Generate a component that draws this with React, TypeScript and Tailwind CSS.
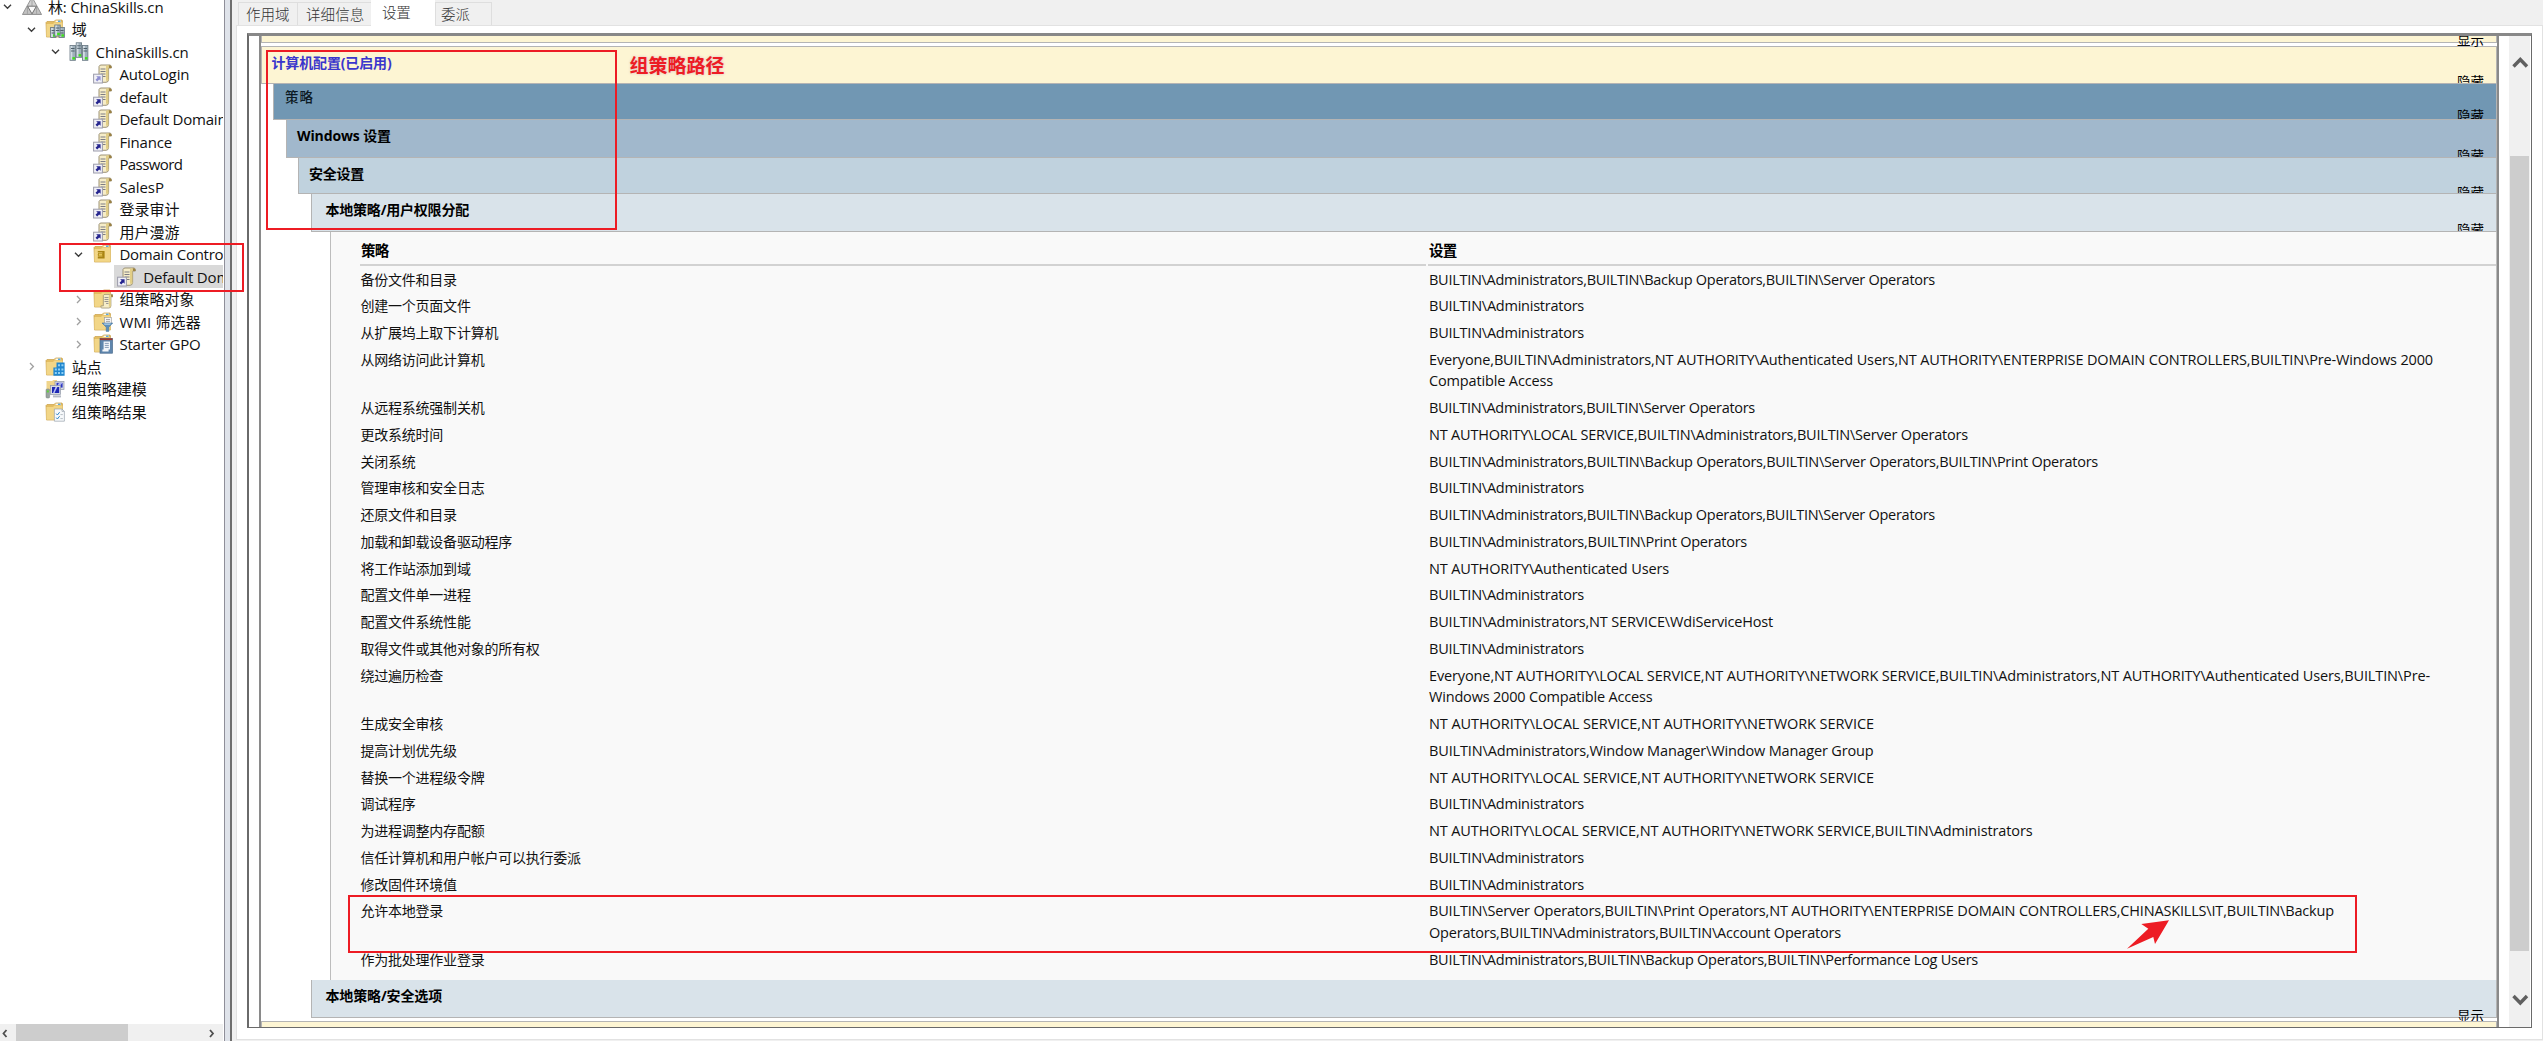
import { useLayoutEffect, useRef, type ReactNode } from 'react';

/* A single line of text whose tracking is tuned so that it spans `w` pixels. */
function Fit({ t, w, className = '' }: { t: string; w: number; className?: string }) {
  const ref = useRef<HTMLSpanElement>(null);
  useLayoutEffect(() => {
    const el = ref.current!;
    el.style.letterSpacing = '0px';
    const natural = el.getBoundingClientRect().width;
    el.style.letterSpacing = `${(w - natural) / t.length}px`;
  }, [t, w]);
  return (
    <span ref={ref} className={'inline-block whitespace-pre ' + className}>
      {t}
    </span>
  );
}

/* ---------- icons ---------- */

const Folder = () => (
  <>
    <path d="M1 3.5 L2 2.5 H9 L10.5 1 H17 L17.5 2 V18 H1.5 Z" fill="#e3bd62" stroke="#c99f47" strokeWidth=".7" />
    <path d="M1.5 5 H8 L9.5 3.5 H17.5 V17.8 H1.5 Z" fill="#f2d687" />
    <rect x="10.5" y="1.6" width="5.5" height="1.3" fill="#fff" />
    <rect x="13" y="1.6" width="2.6" height="1.3" fill="#4aa0dc" />
  </>
);

const Server = ({ x, y, h }: { x: number; y: number; h: number }) => (
  <>
    <rect x={x} y={y} width="5.4" height={h} fill="#9fb0bb" stroke="#657680" strokeWidth=".8" />
    <rect x={x + 0.5} y={y + 0.5} width="1.8" height={h - 1} fill="#d3dde4" />
    <path d={`M${x + 1} ${y + 3}h3.6M${x + 1} ${y + 5.5}h3.6`} stroke="#4f606b" strokeWidth="1" />
    <rect x={x + 2.4} y={y + h - 3.2} width="2.6" height="2.4" fill="#3fe01c" />
  </>
);

const Scroll = ({ x = 0, y = 0, s = 1 }: { x?: number; y?: number; s?: number }) => (
  <g transform={`translate(${x} ${y}) scale(${s})`}>
    <path d="M6 2.5 Q6.5 1 8 1 H17 Q18.6 1 18.4 4 H15.6 V15.5 Q15.4 18.3 13 18.3 H4 Q2.5 18 3 15.5 H6 Z" fill="#f6edc8" stroke="#93886a" strokeWidth=".9" />
    <path d="M13 2 V16.8 H15.4 V3 Q15.6 1.2 17 1.2 H14.4 Z" fill="#e2ce86" />
    <path d="M15.8 1.3 Q18.6 1 18.4 4 H15.8 Z" fill="#9c8140" />
    <path d="M7.5 5h5M7.5 7.5h5M7.5 10h5M9.5 12.5h3" stroke="#7d7c84" strokeWidth="1" />
  </g>
);

function Icon({ kind }: { kind: string }) {
  return (
    <svg viewBox="0 0 20 20" className="h-5 w-5 shrink-0">
      {kind === 'forest' && (
        <>
          <path d="M10 0 L19.6 17.5 H.4 Z" fill="#a5a5a5" stroke="#7c7c7c" strokeWidth=".7" />
          <path d="M10 1 L14.4 9 H5.6Z" fill="#d2d2d2" />
          <path d="M5.4 9.6 L9.6 16.8 H1.4Z M14.6 9.6 L18.6 16.8 H10.4Z" fill="#c2c2c2" />
          <path d="M5.6 9.2 H14.4 L10 16.8Z" fill="#fafafa" stroke="#6c6c6c" strokeWidth=".9" />
          <path d="M10 1 V9 M5.4 9.6 V16.8 M14.6 9.6V16.8" stroke="#8c8c8c" strokeWidth=".6" />
        </>
      )}
      {kind === 'domains' && (
        <>
          <Folder />
          <Server x={5.6} y={8.5} h={10} />
          <Server x={14} y={8.5} h={10} />
          <Server x={9.8} y={6} h={11} />
        </>
      )}
      {kind === 'domain' && (
        <>
          <Server x={1} y={3.5} h={14.8} />
          <Server x={13.5} y={3.5} h={14.8} />
          <Server x={7.2} y={0.8} h={14.5} />
        </>
      )}
      {(kind === 'link' || kind === 'linkoff') && (
        <>
          <Scroll />
          <rect x=".6" y="10.2" width="8.8" height="8.8" fill="#f0f0f7" stroke="#9c9cab" strokeWidth="1" />
          <path d="M3.2 12.2 H7.6 V16.8 L6.2 15.4 L4.2 17.4 L2.5 15.8 L4.6 13.7 Z" fill={kind === 'link' ? '#25258f' : '#8f8fd0'} />
        </>
      )}
      {kind === 'ou' && (
        <>
          <Folder />
          <path d="M4.8 7 H11.6 V14.4 H4.8 V12.6 H9.4 V11.4 H4.8 V10 H9.4 V8.6 H4.8Z" fill="#a98412" />
          <rect x="5.4" y="9.6" width="4" height="2.4" fill="#e6c552" stroke="#a98412" strokeWidth=".6" />
        </>
      )}
      {kind === 'objects' && (
        <>
          <Folder />
          <Scroll x={5.6} y={4.6} s={0.79} />
        </>
      )}
      {kind === 'wmi' && (
        <>
          <Folder />
          <rect x="11.5" y="5.5" width="7" height="6" fill="#f4f4f4" stroke="#9a9a9a" strokeWidth=".6" />
          <path d="M13 7.5h4M13 9.4h4" stroke="#888" strokeWidth=".7" />
          <path d="M9 11 H19.8 L15.8 15.2 V19.4 H13.2 V15.2 Z" fill="#5a8fbd" stroke="#406f99" strokeWidth=".5" />
          <path d="M10.5 11.6 H18 L17 12.8H11.6Z" fill="#b5d3ea" />
        </>
      )}
      {kind === 'starter' && (
        <>
          <Folder />
          <rect x="7" y="4.6" width="12.4" height="14.6" fill="#5f86ad" stroke="#47698c" strokeWidth=".7" />
          <rect x="7" y="4.3" width="12.4" height="1.8" fill="#9b3a32" />
          <path d="M10.6 7.4 H17 V15.4 H15.6 V17.4 H9.4 V15.6 H10.6Z" fill="#f3f6fa" />
          <path d="M11.8 9.4h4M11.8 11.4h4M11.8 13.4h4" stroke="#6d87a4" strokeWidth=".8" />
        </>
      )}
      {kind === 'sites' && (
        <>
          <Folder />
          <path d="M11.5 5.6 H19.6 V18.8 H8.4 V10.4 H11.5Z" fill="#1f86cf" />
          <path d="M13 7.2h2v2h-2zM16.4 7.2h2v2h-2zM9.8 11.4h2v2h-2zM13 11.4h2v2h-2zM16.4 11.4h2v2h-2zM9.8 15h2v2h-2zM13 15h2v2h-2zM16.4 15h2v2h-2z" fill="#8ed0f5" />
        </>
      )}
      {kind === 'modeling' && (
        <>
          <path d="M1.5 2 H7 L8.5 1 H12 V12 H1.5Z" fill="#f0d58b" />
          <rect x="10" y="2.4" width="9" height="8" fill="#d7dbe2" stroke="#8f96a6" strokeWidth=".7" />
          <path d="M11.5 3.8 H17.6 V8.6 H11.5Z" fill="#2b35c4" />
          <path d="M14 3.8 L17.6 3.8 L13.5 8.6 H11.5Z" fill="#a9b1f0" />
          <rect x="5.6" y="6.6" width="10" height="9" fill="#d7dbe2" stroke="#8f96a6" strokeWidth=".7" />
          <rect x="7" y="8" width="7.2" height="6" fill="#1e28b4" />
          <path d="M10.5 8 H12.4 L9.5 14H8Z" fill="#b9c0f5" />
          <rect x="8" y="16.4" width="8" height="2" fill="#b5bac4" />
          <rect x="1" y="10" width="3.6" height="9" rx="1" fill="#9aa3a0" stroke="#74807c" strokeWidth=".5" />
          <rect x="1.8" y="11.4" width="2" height="2" fill="#5ed43a" />
        </>
      )}
      {kind === 'results' && (
        <>
          <Folder />
          <path d="M9.4 7 H17 L19.4 9.4 V19.2 H9.4Z" fill="#f7f9fb" stroke="#9aa4ae" strokeWidth=".7" />
          <path d="M17 7 V9.4 H19.4" fill="none" stroke="#9aa4ae" strokeWidth=".7" />
          <path d="M11.2 11.6 l1.2 1.4 l2.2 -2.8 M11.2 15.6 l1.2 1.4 l2.2 -2.8" fill="none" stroke="#2f86c8" strokeWidth="1" />
          <path d="M15.4 12.6h2.4M15.4 16.6h2.4" stroke="#a5adb5" strokeWidth=".8" />
        </>
      )}
    </svg>
  );
}

/* ---------- tree ---------- */

type Node = { level: number; text: string; icon: string; w: number; open?: boolean; closed?: boolean; selected?: boolean };

const TREE: Node[] = [
  { level: 0, text: '林: ChinaSkills.cn', icon: 'forest', w: 115.5, open: true },
  { level: 1, text: '域', icon: 'domains', w: 15, open: true },
  { level: 2, text: 'ChinaSkills.cn', icon: 'domain', w: 93, open: true },
  { level: 3, text: 'AutoLogin', icon: 'linkoff', w: 70 },
  { level: 3, text: 'default', icon: 'link', w: 48 },
  { level: 3, text: 'Default Domain', icon: 'link', w: 107 },
  { level: 3, text: 'Finance', icon: 'link', w: 52.5 },
  { level: 3, text: 'Password', icon: 'link', w: 63 },
  { level: 3, text: 'SalesP', icon: 'link', w: 44.5 },
  { level: 3, text: '登录审计', icon: 'link', w: 60 },
  { level: 3, text: '用户漫游', icon: 'link', w: 60 },
  { level: 3, text: 'Domain Contro', icon: 'ou', w: 104, open: true },
  { level: 4, text: 'Default Dom', icon: 'link', w: 87, selected: true },
  { level: 3, text: '组策略对象', icon: 'objects', w: 75, closed: true },
  { level: 3, text: 'WMI 筛选器', icon: 'wmi', w: 81.5, closed: true },
  { level: 3, text: 'Starter GPO', icon: 'starter', w: 81, closed: true },
  { level: 1, text: '站点', icon: 'sites', w: 30, closed: true },
  { level: 1, text: '组策略建模', icon: 'modeling', w: 75 },
  { level: 1, text: '组策略结果', icon: 'results', w: 75 },
];

const INDENT = ['pl-0', 'pl-[23.8px]', 'pl-[47.6px]', 'pl-[71.4px]', 'pl-[95.2px]'];

function TreeRow({ n }: { n: Node }) {
  return (
    <div className={'flex h-[22.5px] items-center ' + INDENT[n.level]}>
      <div className="flex w-[19px] shrink-0 items-center pl-[3px]">
        {n.open && (
          <svg viewBox="0 0 9 9" className="h-[9px] w-[9px]">
            <path d="M1 2.8 L4.5 6.2 L8 2.8" fill="none" stroke="#3c3c3c" strokeWidth="1.4" />
          </svg>
        )}
        {n.closed && (
          <svg viewBox="0 0 9 9" className="h-[9px] w-[9px]">
            <path d="M3 1 L6.4 4.5 L3 8" fill="none" stroke="#a0a0a0" strokeWidth="1.3" />
          </svg>
        )}
      </div>
      <div className={'flex h-full min-w-0 flex-1 items-center gap-[6.5px] pl-[2.5px] ' + (n.selected ? 'bg-[#d9d9d9]' : '')}>
        <Icon kind={n.icon} />
        <Fit t={n.text} w={n.w} className="text-[15px] leading-[22px] text-[#111]" />
      </div>
    </div>
  );
}

function Sidebar() {
  return (
    <div className="flex w-[224px] shrink-0 flex-col bg-white">
      <div className="min-h-0 w-[223px] flex-1 overflow-hidden">
        <div className="-mt-[4.6px]">
          {TREE.map((n) => (
            <TreeRow key={n.text} n={n} />
          ))}
        </div>
      </div>
      <div className="flex h-[17px] w-[223px] items-center bg-[#f0f0f0]">
        <svg viewBox="0 0 16 17" className="h-[17px] w-4">
          <path d="M6.5 6 L3.5 9.5 L6.5 13" fill="none" stroke="#4f4f4f" strokeWidth="1.8" />
        </svg>
        <div className="h-full w-[112px] bg-[#cdcdcd]" />
        <div className="flex-1" />
        <svg viewBox="0 0 16 17" className="h-[17px] w-4">
          <path d="M3 6 L6 9.5 L3 13" fill="none" stroke="#4f4f4f" strokeWidth="1.8" />
        </svg>
      </div>
    </div>
  );
}

/* ---------- report ---------- */

function Action({ t, className }: { t: string; className: string }) {
  return <span className={'relative z-10 mr-[12px] shrink-0 whitespace-nowrap text-[13.5px] leading-[14px] text-black ' + className}>{t}</span>;
}

function Bar({ className, children }: { className: string; children: ReactNode }) {
  return <div className={'flex shrink-0 items-start justify-between border border-t-0 border-[#b4b4b4] ' + className}>{children}</div>;
}

const B = 'BUILTIN\\Administrators';
const N = 'NT AUTHORITY\\';

const ROWS: [string, [string, number][]][] = [
  ['备份文件和目录', [[B + ',BUILTIN\\Backup Operators,BUILTIN\\Server Operators', 506]]],
  ['创建一个页面文件', [[B, 155]]],
  ['从扩展坞上取下计算机', [[B, 155]]],
  ['从网络访问此计算机', [
    ['Everyone,' + B + ',' + N + 'Authenticated Users,' + N + 'ENTERPRISE DOMAIN CONTROLLERS,BUILTIN\\Pre-Windows 2000', 1004],
    ['Compatible Access', 124],
  ]],
  ['从远程系统强制关机', [[B + ',BUILTIN\\Server Operators', 326]]],
  ['更改系统时间', [[N + 'LOCAL SERVICE,' + B + ',BUILTIN\\Server Operators', 539]]],
  ['关闭系统', [[B + ',BUILTIN\\Backup Operators,BUILTIN\\Server Operators,BUILTIN\\Print Operators', 669]]],
  ['管理审核和安全日志', [[B, 155]]],
  ['还原文件和目录', [[B + ',BUILTIN\\Backup Operators,BUILTIN\\Server Operators', 506]]],
  ['加载和卸载设备驱动程序', [[B + ',BUILTIN\\Print Operators', 318]]],
  ['将工作站添加到域', [[N + 'Authenticated Users', 240]]],
  ['配置文件单一进程', [[B, 155]]],
  ['配置文件系统性能', [[B + ',NT SERVICE\\WdiServiceHost', 344]]],
  ['取得文件或其他对象的所有权', [[B, 155]]],
  ['绕过遍历检查', [
    ['Everyone,' + N + 'LOCAL SERVICE,' + N + 'NETWORK SERVICE,' + B + ',' + N + 'Authenticated Users,BUILTIN\\Pre-', 1001],
    ['Windows 2000 Compatible Access', 223.5],
  ]],
  ['生成安全审核', [[N + 'LOCAL SERVICE,' + N + 'NETWORK SERVICE', 445]]],
  ['提高计划优先级', [[B + ',Window Manager\\Window Manager Group', 444.5]]],
  ['替换一个进程级令牌', [[N + 'LOCAL SERVICE,' + N + 'NETWORK SERVICE', 445]]],
  ['调试程序', [[B, 155]]],
  ['为进程调整内存配额', [[N + 'LOCAL SERVICE,' + N + 'NETWORK SERVICE,' + B, 603.5]]],
  ['信任计算机和用户帐户可以执行委派', [[B, 155]]],
  ['修改固件环境值', [[B, 155]]],
  ['允许本地登录', [
    ['BUILTIN\\Server Operators,BUILTIN\\Print Operators,' + N + 'ENTERPRISE DOMAIN CONTROLLERS,CHINASKILLS\\IT,BUILTIN\\Backup', 905],
    ['Operators,' + B + ',BUILTIN\\Account Operators', 412],
  ]],
  ['作为批处理作业登录', [[B + ',BUILTIN\\Backup Operators,BUILTIN\\Performance Log Users', 549]]],
];

function PolicyTable() {
  return (
    <div className="ml-[69px] h-[748px] shrink-0 border-x border-[#bdbdbd] bg-[#f9f9f9] pl-[29px] text-[14.5px] leading-[21.6px] text-[#111]">
      <div className="flex gap-[2px] pt-[8px] font-bold text-black">
        <div className="w-[1066px] border-b-2 border-[#d2d2d2] pb-[2px] pl-px">
          <Fit t="策略" w={27.5} />
        </div>
        <div className="flex-1 border-b-2 border-[#d2d2d2] pb-[2px] pl-px">
          <Fit t="设置" w={27.5} />
        </div>
      </div>
      <div className="pt-[3px]">
        {ROWS.map(([name, lines]) => (
          <div key={name} className="flex pb-[5.17px]">
            <div className="w-[1068px] pl-[0.5px]">
              <Fit t={name} w={name.length * 13.77} className="text-[14px]" />
            </div>
            <div className="flex flex-1 flex-col items-start pl-px">
              {lines.map(([t, w]) => (
                <Fit key={t} t={t} w={w} />
              ))}
            </div>
          </div>
        ))}
      </div>
    </div>
  );
}

function Report() {
  return (
    <div className="ml-[10px] flex w-[2240px] shrink-0 flex-col overflow-hidden border-l-2 border-r-2 border-[#8a8a8a] bg-white text-[14px] font-bold">
      <Bar className="h-[7px] bg-[#fdf5d3]">
        <span />
        <Action t="显示" className="-mt-[3px] font-normal" />
      </Bar>
      <div className="mt-[3px] h-px shrink-0 bg-[#b4b4b4]" />
      <Bar className="h-[37px] overflow-hidden bg-[#fdf5d3]">
        <Fit t="计算机配置(已启用)" w={120} className="mt-[5px] ml-[9.5px] text-[#3a36cc]" />
        <Action t="隐藏" className="mt-[28px] font-normal" />
      </Bar>
      <Bar className="ml-[12px] h-[36px] overflow-hidden bg-[#7197b3]">
        <Fit t="策略" w={29} className="mt-[3px] ml-[11px] text-[13.5px] font-medium text-[#0c1a24]" />
        <Action t="隐藏" className="mt-[25px] font-normal" />
      </Bar>
      <Bar className="ml-[25px] h-[38px] overflow-hidden bg-[#a1b8cc]">
        <Fit t="Windows 设置" w={94} className="mt-[5px] ml-[10px]" />
        <Action t="隐藏" className="mt-[29px] font-normal" />
      </Bar>
      <Bar className="ml-[37px] h-[36px] overflow-hidden bg-[#c0d2de]">
        <Fit t="安全设置" w={55} className="mt-[5px] ml-[10px]" />
        <Action t="隐藏" className="mt-[28px] font-normal" />
      </Bar>
      <Bar className="ml-[50px] h-[38px] overflow-hidden bg-[#d9e3ea]">
        <Fit t="本地策略/用户权限分配" w={143.5} className="mt-[5px] ml-[13.5px]" />
        <Action t="隐藏" className="mt-[29px] font-normal" />
      </Bar>
      <div className="font-normal">
        <PolicyTable />
      </div>
      <Bar className="ml-[50px] h-[38px] border-t bg-[#d9e3ea]">
        <Fit t="本地策略/安全选项" w={116.5} className="mt-[5px] ml-[13.5px]" />
        <Action t="显示" className="mt-[29px] font-normal" />
      </Bar>
      <div className="relative z-20 mt-[3px] flex-1 border border-b-0 border-[#b4b4b4] bg-[#fdf5d3]" />
    </div>
  );
}

function ScrollBar() {
  return (
    <div className="ml-[10px] flex w-[21px] shrink-0 flex-col items-center bg-[#f0f0f0]">
      <svg viewBox="0 0 20 120" className="h-[120px] w-5">
        <path d="M3.5 30.5 L10.3 23.5 L17 30.5" fill="none" stroke="#5f5f5f" strokeWidth="3.4" />
      </svg>
      <div className="h-[795px] w-[19px] bg-[#cdcdcd]" />
      <svg viewBox="0 0 20 76" className="h-[76px] w-5">
        <path d="M3.5 45 L10.3 52 L17 45" fill="none" stroke="#5f5f5f" strokeWidth="3.4" />
      </svg>
    </div>
  );
}

export default function App() {
  return (
    <div className="relative flex h-[1041px] w-[2543px] overflow-hidden bg-[#f0f0f0] font-['Open_Sans','Noto_Sans_CJK_SC',sans-serif] text-black">
      <Sidebar />
      <div className="w-[6px] shrink-0 border-l border-[#8f8f99] bg-[#dfe3ea]" />
      <div className="w-[2px] shrink-0 bg-[#6e6e6e]" />

      <div className="flex min-w-0 flex-1 flex-col pl-1">
        <div className="flex h-[25px] shrink-0 items-end pl-[2px] text-[14.5px] font-light text-[#333]">
          <div className="h-[23px] w-[60px] border border-b-0 border-[#dedede] pl-[7px] leading-[24px]">
            <Fit t="作用域" w={43.5} />
          </div>
          <div className="h-[23px] w-[73px] border-t border-[#dedede] pl-[8px] leading-[24px]">
            <Fit t="详细信息" w={58.5} />
          </div>
          <div className="z-10 -mb-px h-[26px] w-[64px] bg-white pl-[11px] leading-[25px]">
            <Fit t="设置" w={28.5} />
          </div>
          <div className="h-[23px] w-[57px] border border-b-0 border-[#dedede] pl-[5px] leading-[24px]">
            <Fit t="委派" w={29} />
          </div>
        </div>

        <div className="mb-px min-h-0 flex-1 border border-[#e2e2e2] bg-white pt-[7px] pr-[10px] pb-[12px] pl-[10px]">
          <div className="flex h-[995px] border border-t-[3px] border-l-2 border-[#6a6a6a] border-t-[#888]">
            <Report />
            <ScrollBar />
          </div>
        </div>
      </div>

      {/* annotations */}
      <div className="absolute top-[243px] left-[59px] h-[49px] w-[185px] border-2 border-[#ed1c24]" />
      <div className="absolute top-[50px] left-[266px] h-[180px] w-[351px] border-2 border-[#ed1c24]" />
      <div className="absolute top-[895px] left-[348px] h-[58px] w-[2009px] border-2 border-[#ed1c24]" />
      <div className="absolute top-[52px] left-[629.5px] text-[19px] leading-[28px] font-bold text-[#ed1c24] [text-shadow:0_0_3px_#d9b8c0]">组策略路径</div>
      <svg viewBox="0 0 43 30" className="absolute top-[920px] left-[2127px] h-[30px] w-[43px]">
        <path d="M42 .3 L14.3 4 L21.3 8.7 L0 28.7 L26.3 17 L28 24 Z" fill="#ed1c24" />
      </svg>
    </div>
  );
}
